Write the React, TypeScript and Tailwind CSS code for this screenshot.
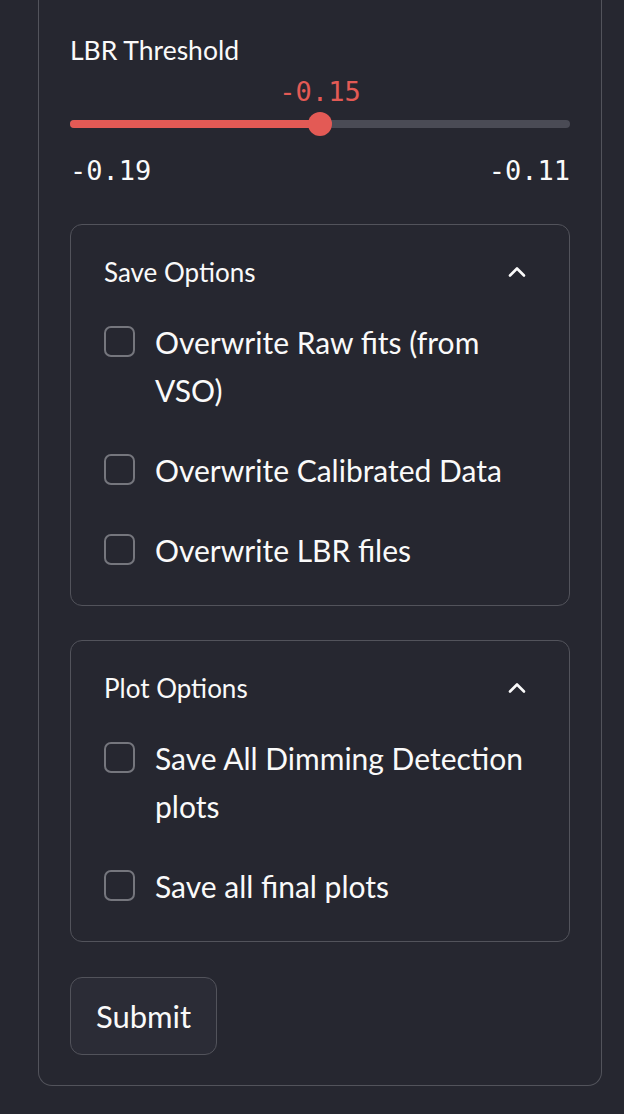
import React from "react";

const sans = "font-['Lato','Noto_Sans',sans-serif]";
const mono = "font-['DejaVu_Sans_Mono','Liberation_Mono',monospace]";

function Chevron() {
  return (
    <svg width="24" height="24" viewBox="0 0 24 24" fill="none" stroke="#fafafa" strokeWidth="2.6" strokeLinecap="round" strokeLinejoin="round">
      <path d="M5 15.5l7-7 7 7" />
    </svg>
  );
}

function Checkbox({ label, first }: { label: string; first?: boolean }) {
  return (
    <label className={`flex items-start gap-[20px] ${first ? "mt-[22px]" : "mt-[32px]"}`}>
      <span className="mt-[8px] h-[31px] w-[31px] shrink-0 rounded-[7px] border-2 border-[#75767d] bg-[#262730]" />
      <span className={`${sans} text-[30px] leading-[48px] text-[#fafafa]`}>{label}</span>
    </label>
  );
}

function Expander({ title, items }: { title: string; items: string[] }) {
  return (
    <div className="rounded-[12px] border border-[#52535b] pl-[33px] pr-[40px] pt-[23px] pb-[31px]">
      <div className="flex h-[48px] items-center justify-between">
        <span className={`${sans} text-[26px] text-[#fafafa]`}>{title}</span>
        <Chevron />
      </div>
      {items.map((it, i) => (
        <Checkbox key={it} label={it} first={i === 0} />
      ))}
    </div>
  );
}

export default function App() {
  const pct = 50;
  return (
    <div className="min-h-[1114px] w-[624px] bg-[#262730] pl-[38px] pr-[22px] pb-[28px]">
      <div className="rounded-b-[14px] border-x border-b border-[#52535b] px-[31px] pt-[32px] pb-[30px]">
        {/* slider */}
        <div className={`${sans} h-[36px] text-[26.5px] leading-[36px] text-[#fafafa]`}>LBR Threshold</div>
        <div className="relative mt-[8px] h-[30px]">
          <span
            className={`${mono} absolute top-[1px] -translate-x-1/2 text-[27px] leading-[30px] text-[#e35a55]`}
            style={{ left: `${pct}%` }}
          >
            -0.15
          </span>
        </div>
        <div className="relative h-[36px]">
          <div className="absolute left-0 right-0 top-[14px] h-[8px] rounded-full bg-[#4a4b55]" />
          <div className="absolute left-0 top-[14px] h-[8px] rounded-full bg-[#e35a55]" style={{ width: `${pct}%` }} />
          <div
            className="absolute top-[6px] h-[24px] w-[24px] -translate-x-1/2 rounded-full bg-[#e35a55]"
            style={{ left: `${pct}%` }}
          />
        </div>
        <div className={`${mono} mt-[14px] flex h-[30px] justify-between text-[27px] leading-[30px] text-[#fafafa]`}>
          <span>-0.19</span>
          <span>-0.11</span>
        </div>

        <div className="mt-[38px]">
          <Expander
            title="Save Options"
            items={["Overwrite Raw fits (from VSO)", "Overwrite Calibrated Data", "Overwrite LBR files"]}
          />
        </div>
        <div className="mt-[34px]">
          <Expander title="Plot Options" items={["Save All Dimming Detection plots", "Save all final plots"]} />
        </div>

        <button
          className={`${sans} mt-[35px] h-[78px] w-[147px] rounded-[12px] border border-[#52535b] bg-[#2b2c36] text-[31px] text-[#fafafa]`}
        >
          Submit
        </button>
      </div>
    </div>
  );
}
